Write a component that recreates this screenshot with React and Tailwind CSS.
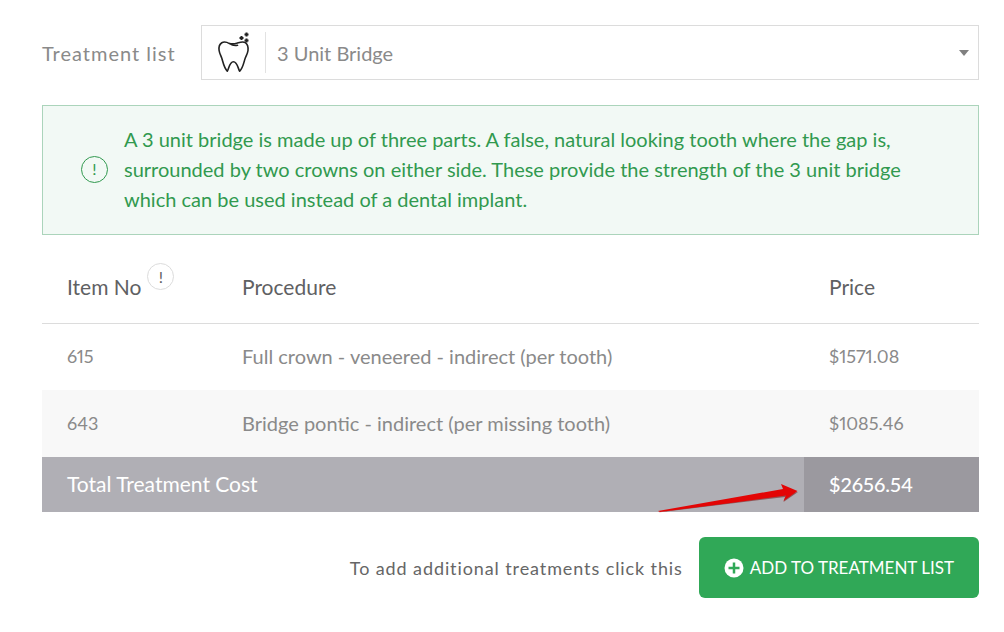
import React, { useState } from "react";

const treatments = [
  {
    id: "3-unit-bridge",
    name: "3 Unit Bridge",
    description:
      "A 3 unit bridge is made up of three parts. A false, natural looking tooth where the gap is, surrounded by two crowns on either side. These provide the strength of the 3 unit bridge which can be used instead of a dental implant.",
    items: [
      { code: "615", procedure: "Full crown - veneered - indirect (per tooth)", price: 1571.08 },
      { code: "643", procedure: "Bridge pontic - indirect (per missing tooth)", price: 1085.46 },
    ],
  },
];

function ToothIcon() {
  return (
    <svg viewBox="0 0 34 42" className="h-[42px] w-[34px]" fill="none" aria-hidden="true">
      <path
        d="M12.5 11.6C10 10.2 7.2 9.3 4.8 10.8C2.2 12.4 1.7 15.6 2.1 18.5C2.5 21.3 3.9 23.600 4.800 26.200C6 30 6.800 35.500 10.300 39.200C11.800 37.500 12.300 29.700 16.400 29.700C20.500 29.700 21.200 37.500 22.700 39.200C26.300 35.500 26.800 30 28.200 26.200C29.200 23.600 30.700 21.300 31 18.500C31.300 15.400 30.700 12.300 28.300 10.700C25.700 9 22.400 10.600 19.800 11.300C17 12 15 12 12.500 11.600ZM12.500 11.600C15.300 13.500 17.800 13.900 20.500 13.300"
        stroke="#222"
        strokeWidth="1.6"
        strokeLinejoin="round"
        strokeLinecap="round"
      />
      <path
        d="M29.500 0.500v4M27.500 2.500h4M24.500 4v4M22.500 6h4M29.500 6.500v4M27.500 8.500h4"
        stroke="#222"
        strokeWidth="2"
      />
    </svg>
  );
}

function Arrow() {
  return (
    <svg viewBox="0 0 142 30" className="absolute right-[5px] -bottom-px h-[30px] w-[142px]" aria-hidden="true">
      <path d="M1 29.5L128 14L126.500 19L141 9L70 17Z" fill="#7a2020" opacity="0.6" />
      <path d="M1 28L126 6L124 1L140.500 8L126.500 18L129 12.500L70 20.500L3 29Z" fill="#e30505" />
    </svg>
  );
}

function App() {
  const [selected, setSelected] = useState(treatments[0].id);
  const treatment = treatments.find((t) => t.id === selected);
  const total = treatment.items.reduce((sum, item) => sum + item.price, 0);

  return (
    <div className="bg-white pt-[25px] pr-[25px] pb-8 pl-[42px] font-['Lato',sans-serif] text-xl text-[#8a8a8a]">
      <div className="flex items-center">
        <label htmlFor="treatment" className="w-[159px] shrink-0 tracking-wider">
          Treatment list
        </label>
        <div className="relative flex-1">
          <select
            id="treatment"
            value={selected}
            onChange={(e) => setSelected(e.target.value)}
            className="block h-[55px] w-full appearance-none border border-[#dcdcdc] bg-white pl-[75px] pr-8 text-[#8a8a8a]"
          >
            {treatments.map((t) => (
              <option key={t.id} value={t.id}>
                {t.name}
              </option>
            ))}
          </select>
          <div className="pointer-events-none absolute inset-y-[7px] left-4 flex w-[49px] items-center border-r border-[#e2e2e2]">
            <ToothIcon />
          </div>
          <svg viewBox="0 0 10 6" className="pointer-events-none absolute top-[25px] right-[10px] h-[6px] w-[10px]" aria-hidden="true">
            <path d="M0 0H10L5 6Z" fill="#808080" />
          </svg>
        </div>
      </div>

      <div className="mt-[25px] flex items-center gap-4 border border-[#abd4bb] bg-[#f2f9f5] pt-[18px] pr-12 pb-5 pl-[38px] text-[#31994f]">
        <span className="flex size-[27px] shrink-0 items-center justify-center rounded-full border border-[#31994f] text-base">!</span>
        <p className="leading-[30px]">{treatment.description}</p>
      </div>

      <table className="w-full table-fixed text-left">
        <colgroup>
          <col className="w-[175px]" />
          <col />
          <col className="w-[175px]" />
        </colgroup>
        <thead className="text-[21px] text-[#5f6163]">
          <tr className="h-[88px] border-b border-[#dcdcdc]">
            <th className="pt-4 pl-[25px] font-normal">
              <span className="flex items-center gap-1.5">
                Item No
                <button
                  type="button"
                  aria-label="About item numbers"
                  className="mb-5 flex size-[27px] items-center justify-center rounded-full border border-[#dcdcdc] text-base"
                >
                  !
                </button>
              </span>
            </th>
            <th className="pt-4 pl-[25px] font-normal">Procedure</th>
            <th className="pt-4 pl-[25px] font-normal">Price</th>
          </tr>
        </thead>
        <tbody className="proportional-nums">
          {treatment.items.map((item) => (
            <tr key={item.code} className="h-[67px] even:bg-[#f8f8f8]">
              <td className="pb-0.5 pl-[25px] text-lg">{item.code}</td>
              <td className="pb-0.5 pl-[25px]">{item.procedure}</td>
              <td className="pb-0.5 pl-[25px] text-lg">${item.price.toFixed(2)}</td>
            </tr>
          ))}
        </tbody>
        <tfoot className="text-white">
          <tr className="h-[55px]">
            <th colSpan="2" className="relative bg-[#b0afb5] pb-0.5 pl-[25px] text-[21px] font-normal">
              Total Treatment Cost
              <Arrow />
            </th>
            <td className="bg-[#9b999f] pb-0.5 pl-[25px] font-medium proportional-nums">${total.toFixed(2)}</td>
          </tr>
        </tfoot>
      </table>

      <div className="mt-[25px] flex items-center justify-end gap-4">
        <p className="text-lg tracking-wider text-[#666]">To add additional treatments click this</p>
        <button type="button" className="flex h-[61px] items-center gap-1.5 rounded-md bg-[#30a857] px-[25px] text-[17px] text-white">
          <svg viewBox="0 0 20 20" className="size-5" aria-hidden="true">
            <circle cx="10" cy="10" r="9.500" fill="#fff" />
            <path d="M10 4.500v11M4.500 10h11" stroke="#30a857" strokeWidth="2.500" />
          </svg>
          ADD TO TREATMENT LIST
        </button>
      </div>
    </div>
  );
}

export default App;
